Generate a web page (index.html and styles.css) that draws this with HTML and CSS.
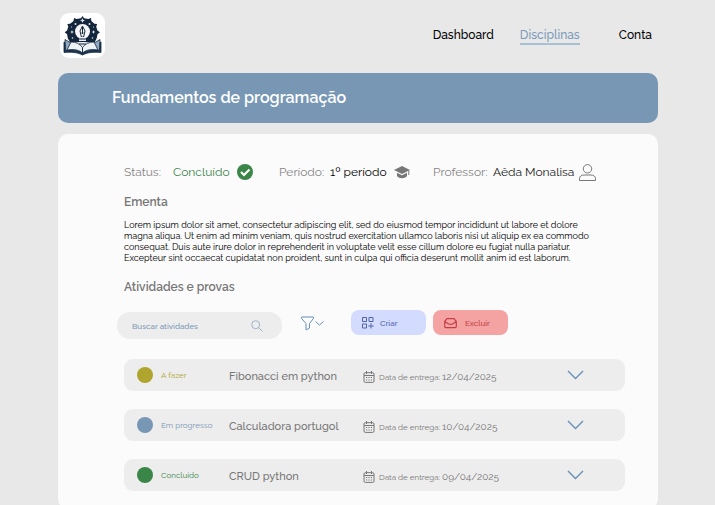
FILE: index.html
```html
<!DOCTYPE html>
<html lang="pt-BR">
<head>
<meta charset="utf-8">
<meta name="viewport" content="width=device-width, initial-scale=1">
<title>Fundamentos de programação</title>
<link rel="stylesheet" href="styles.css">
</head>
<body>
<svg class="defs" aria-hidden="true">
  <symbol id="calendar" viewBox="0 0 12 12"><g fill="none" stroke="currentColor"><rect x="1" y="1.7" width="10" height="9.7" rx="1.3"/><path d="M1 4.5h10M3.5 0v3M8.5 0v3"/><path d="M3 6.5h6M3 9h6" stroke-width="1.2" stroke-dasharray="1.2 1.2"/></g></symbol>
  <symbol id="chevron" viewBox="0 0 17 10"><path d="M1 1l7.5 7.5L16 1" fill="none" stroke="currentColor" stroke-width="1.4"/></symbol>
</svg>
<header class="topbar">
  <a class="logo" href="#" aria-label="Início">
    <svg viewBox="0 0 45 45" width="45" height="45" aria-hidden="true">
      <path fill="#14263b" d="M22.5 3l1.6 2.3 4.2.8L31 5l.3 2.9 3.1 2.8 2.8.2-1 2.6 1.2 4 2.5 1.8-2.4 2-.8 4-2 4H10l-2.2-4-.7-4-2.4-2 2.4-1.8 1.2-4-1-2.6 2.8-.2L13.500 7.900 14 5l2.700 1.100 4.200-.8z"/>
      <circle cx="22.500" cy="18.500" r="7.500" fill="#f5f7f8"/>
      <g fill="#d9e2ea"><path d="M22.500 5l.7 1.800 1.800.7-1.800.7-.7 1.800-.7-1.800-1.800-.7 1.800-.7zM12 17l.6 1.400 1.400.6-1.400.6L12 21l-.6-1.400L10 19l1.400-.6zM33.500 17l.6 1.400 1.400.6-1.400.6-.6 1.400-.6-1.400-1.400-.6 1.400-.6z"/><circle cx="15.500" cy="11" r="1"/><circle cx="29.500" cy="11" r="1"/><circle cx="11.500" cy="14" r=".6"/><circle cx="33.500" cy="14" r=".6"/><circle cx="12.500" cy="25" r=".8"/><circle cx="32.500" cy="25" r=".8"/></g>
      <path d="M22.500 13l2.500 5-1.400 6h-2.200L20 18z" fill="#fff" stroke="#14263b"/>
      <path d="M22.500 14v6" stroke="#14263b"/>
      <circle cx="22.500" cy="20" r="1" fill="#14263b"/>
      <path d="M19 24h7v9h-7z" fill="#e9eff3"/>
      <path d="M19 26h7M19 28.500h7M19 31h7" stroke="#14263b" stroke-width="1.200"/>
      <g stroke="#14263b" stroke-width=".8" stroke-linejoin="round">
        <path d="M4 29v10.500c7-.5 13-.5 18.500 2.500C28 39 34 39 41 39.500V29l-18.500 9z" fill="#1c3854"/>
        <path d="M5 26.500l5 3L22.500 40C17 37 12 36.500 5.500 37.500zM40 26.500l-5 3L22.500 40C28 37 33 36.500 39.500 37.500z" fill="#8da9bf"/>
        <path d="M11 29c5 0 9 2 11.500 5.500V40C18 36.500 14 36 7 37zM34 29c-5 0-9 2-11.500 5.500V40C27 36.500 31 36 38 37z" fill="#eef3f6"/>
      </g>
    </svg>
  </a>
  <nav class="nav" aria-label="Principal">
    <a href="#">Dashboard</a>
    <a class="current" href="#" aria-current="page">Disciplinas</a>
    <a href="#">Conta</a>
  </nav>
</header>
<main>
  <div class="banner"><h1>Fundamentos de programação</h1></div>
  <section class="card">
    <dl class="meta">
      <div class="meta-status"><dt>Status:</dt><dd class="done">Concluído</dd>
        <svg width="16" height="16" viewBox="0 0 16 16" aria-hidden="true"><circle cx="8" cy="8" r="8" fill="#3a8548"/><path d="M4 8l3 3 5.500-5.500" fill="none" stroke="#fff" stroke-width="2.200"/></svg>
      </div>
      <div class="meta-period"><dt>Período:</dt><dd class="strong">1º período</dd>
        <svg width="16" height="16" viewBox="0 0 16 16" aria-hidden="true"><path d="M8 2l8 4-8 4-8-4zM3 8.800l5 2.400 5-2.400V12c-2 3-8 3-10 0z" fill="#777"/><path d="M14.800 6.500V11" stroke="#777"/></svg>
      </div>
      <div class="meta-teacher"><dt>Professor:</dt><dd>Aêda Monalisa</dd>
        <svg width="17" height="17" viewBox="0 0 17 17" aria-hidden="true"><g fill="none" stroke="#777"><circle cx="8.500" cy="4.800" r="4.200"/><path d="M.5 16.500v-2C.5 12 3 11 5 11h7c2 0 4.500 1 4.500 3.500v2z"/></g></svg>
      </div>
    </dl>
    <h2>Ementa</h2>
    <p class="summary">Lorem ipsum dolor sit amet, consectetur adipiscing elit, sed do eiusmod tempor incididunt ut labore et dolore<br>magna aliqua. Ut enim ad minim veniam, quis nostrud exercitation ullamco laboris nisi ut aliquip ex ea commodo<br>consequat. Duis aute irure dolor in reprehenderit in voluptate velit esse cillum dolore eu fugiat nulla pariatur.<br>Excepteur sint occaecat cupidatat non proident, sunt in culpa qui officia deserunt mollit anim id est laborum.</p>
    <h2>Atividades e provas</h2>
    <div class="toolbar">
      <div class="search">
        <input type="search" aria-label="Buscar atividades" placeholder="Buscar atividades">
        <svg width="12" height="12" viewBox="0 0 12 12" aria-hidden="true"><g fill="none" stroke="#9db4c9"><circle cx="4.700" cy="4.700" r="4"/><path d="M7.600 7.600l4 4"/></g></svg>
      </div>
      <button class="filter" aria-label="Filtrar">
        <svg width="23" height="15" viewBox="0 0 23 15" aria-hidden="true"><g fill="none" stroke="#6790b8"><path d="M.6 1h11.800v1.500L8.500 7.500V12L5 14V7.500L.6 2.500z"/><path d="M14.500 5.500L18.500 9l4-3.500"/></g></svg>
      </button>
      <button class="action create">
        <svg width="12" height="12" viewBox="0 0 12 12" aria-hidden="true"><path d="M.5.500h4v4h-4zM7 .5h4v4H7zM.5 7h4v4h-4zM9 6.200v5.300M6.300 9h5.400" fill="none" stroke="#5264b0"/></svg>
        Criar
      </button>
      <button class="action remove">
        <svg width="13" height="12" viewBox="0 0 13 12" aria-hidden="true"><path d="M.7 4.500L3 1.700h7l2.300 2.800v5q0 1.200-1.200 1.200H1.900Q.7 10.700.7 9.500zM.7 4.500l3.500 2.200q2.300 1.400 4.600 0l3.500-2.200" fill="none" stroke="#c43f45" stroke-width="1.200"/></svg>
        Excluir
      </button>
    </div>
    <ul class="tasks">
      <li class="todo"><span class="dot"></span><span class="state">A fazer</span><h3>Fibonacci em python</h3>
        <p class="due"><svg width="12" height="12" aria-hidden="true"><use href="#calendar"/></svg><span>Data de entrega: <time datetime="2025-04-12">12/04/2025</time></span></p>
        <button class="expand" aria-label="Abrir Fibonacci em python"><svg width="17" height="10" aria-hidden="true"><use href="#chevron"/></svg></button></li>
      <li class="doing"><span class="dot"></span><span class="state">Em progresso</span><h3>Calculadora portugol</h3>
        <p class="due"><svg width="12" height="12" aria-hidden="true"><use href="#calendar"/></svg><span>Data de entrega: <time datetime="2025-04-10">10/04/2025</time></span></p>
        <button class="expand" aria-label="Abrir Calculadora portugol"><svg width="17" height="10" aria-hidden="true"><use href="#chevron"/></svg></button></li>
      <li class="finished"><span class="dot"></span><span class="state">Concluído</span><h3>CRUD python</h3>
        <p class="due"><svg width="12" height="12" aria-hidden="true"><use href="#calendar"/></svg><span>Data de entrega: <time datetime="2025-04-09">09/04/2025</time></span></p>
        <button class="expand" aria-label="Abrir CRUD python"><svg width="17" height="10" aria-hidden="true"><use href="#chevron"/></svg></button></li>
    </ul>
  </section>
</main>
</body>
</html>
```
FILE: styles.css
```css
* { box-sizing: border-box; margin: 0; padding: 0; }
body {
  padding: 13px 57px 0 58px;
  background: #e8e8e8;
  color: #222;
  font: 12px/20px Raleway, "Open Sans", "Noto Sans", sans-serif;
}
svg { display: block; flex: none; }
button { border: 0; background: none; font: inherit; cursor: pointer; }
ul { list-style: none; }
.defs { position: absolute; width: 0; height: 0; }

.topbar { display: flex; justify-content: space-between; align-items: center; height: 45px; padding: 0 6px 0 2px; }
.logo { width: 45px; height: 45px; border-radius: 9px; background: #fff; }
.nav { display: flex; gap: 26px; font-weight: 500; }
.nav a { color: #000; text-decoration: none; line-height: 16px; border-bottom: 2px solid transparent; }
.nav .current { color: #7c9bbb; border-color: #a8c0d3; margin-right: 13px; }

.banner { margin-top: 15px; padding: 13px 54px; border-radius: 10px; background: #7897b5; color: #fff; }
h1 { font-size: 16px; line-height: 24px; font-weight: 600; }

.card { margin-top: 11px; padding: 28px 33px 18px 66px; border-radius: 10px; background: #fbfbfb; }
.meta { display: grid; grid-template-columns: 155px 154px auto; justify-content: start; white-space: nowrap; }
.meta div { display: grid; align-items: center; justify-content: start; }
.meta-status { grid-template-columns: 49px 64px auto; }
.meta-period { grid-template-columns: 51px 64px auto; }
.meta-teacher { grid-template-columns: 60px 86px auto; }
.meta dt { color: #858585; }
.meta .done { color: #3a8548; }
.meta .strong { color: #000; }
h2 { margin-top: 10px; color: #777; font-size: 12px; line-height: 20px; font-weight: 600; }
.summary { margin: 8px 0 13px; color: #000; font-size: 9px; line-height: 11px; white-space: nowrap; }

.toolbar { display: flex; align-items: center; margin: 11px 0 0 -7px; }
.search { display: flex; align-items: center; width: 165px; height: 27px; margin-top: 4px; padding: 0 19px 0 15px; border-radius: 13px; background: #ededed; }
.search input { flex: 1; min-width: 0; border: 0; outline: 0; background: none; font: inherit; font-size: 8px; font-weight: 500; color: #7897b5; }
.search input::placeholder { color: #7897b5; opacity: 1; }
.filter { margin: 0 27px 0 19px; }
.action { display: flex; align-items: center; width: 75px; height: 25px; margin-bottom: 2px; padding: 0 11px; border-radius: 8px; font-size: 8px; font-weight: 500; }
.create { gap: 6px; margin-right: 7px; background: #d3dcfe; color: #5264b0; }
.remove { gap: 8px; background: #f5a2a3; color: #c43f45; }

.tasks { display: grid; gap: 18px; margin-top: 20px; }
.tasks li { display: grid; grid-template-columns: 24px 68px 134px 1fr auto; align-items: center; height: 32px; padding: 0 41px 0 13px; border-radius: 9px; background: #ededed; color: #777; white-space: nowrap; }
.dot { width: 16px; height: 16px; border-radius: 50%; background: currentColor; }
.state { font-size: 8px; }
.todo .dot, .todo .state { color: #afa52e; }
.doing .dot, .doing .state { color: #7897b5; }
.finished .dot, .finished .state { color: #3a8548; }
h3, .due { padding-top: 3px; }
h3 { font-size: 11px; font-weight: 500; }
.due { display: flex; align-items: center; gap: 4px; font-size: 8px; }
.due time { font-size: 10px; }
.expand { color: #6790b8; }
```
